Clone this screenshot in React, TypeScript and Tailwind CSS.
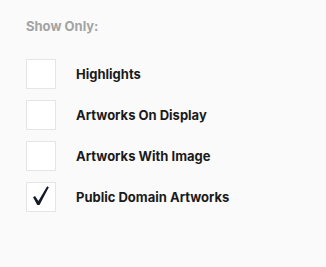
import React, { useState } from 'react';

const options = [
  { label: 'Highlights', checked: false },
  { label: 'Artworks On Display', checked: false },
  { label: 'Artworks With Image', checked: false },
  { label: 'Public Domain Artworks', checked: true },
];

function Check() {
  return (
    <svg width="30" height="30" viewBox="0 0 30 30" className="block">
      <path d="M6.5 15.2 L8.6 14 L12.2 19.2 L21.6 3.6 L23.4 4.6 L13.4 23.6 L11 23.6 Z" fill="#141a26" />
    </svg>
  );
}

export default function App() {
  const [items, setItems] = useState(options);

  const toggle = (i: number) => {
    setItems(items.map((it, idx) => (idx === i ? { ...it, checked: !it.checked } : it)));
  };

  return (
    <div
      className="w-[326px] h-[267px] bg-[#fafafa] pl-[26px] pt-[17px]"
      style={{ fontFamily: 'Inter, "Noto Sans", sans-serif' }}
    >
      <h3 className="text-[13px] leading-[18px] font-bold text-[#a3a3a3]">Show Only:</h3>
      <div className="flex flex-col gap-[11px] mt-[24px]">
        {items.map((it, i) => (
          <label key={it.label} className="flex items-center cursor-pointer" onClick={() => toggle(i)}>
            <span className="w-[30px] h-[30px] bg-white border border-[#e5e5e5] flex items-center justify-center">
              {it.checked && <Check />}
            </span>
            <span className="ml-[20px] mt-[2px] text-[13px] font-bold text-[#1a1a1a]">{it.label}</span>
          </label>
        ))}
      </div>
    </div>
  );
}
